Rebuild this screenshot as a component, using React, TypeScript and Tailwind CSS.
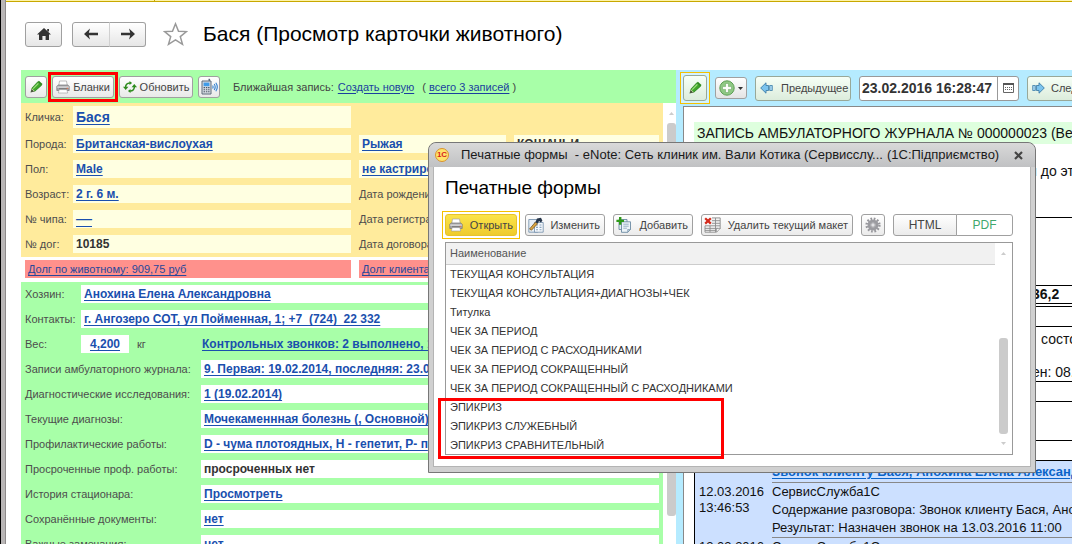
import type { ReactNode } from "react";
import clsx from "clsx";

type LinkRow = { label: string; value: string; plain?: boolean };

const HISTORY: LinkRow[] = [
  { label: "Записи амбулаторного журнала:", value: "9. Первая: 19.02.2014, последняя: 23.02.2016" },
  { label: "Диагностические исследования:", value: "1 (19.02.2014)" },
  { label: "Текущие диагнозы:", value: "Мочекаменнная болезнь (, Основной)" },
  { label: "Профилактические работы:", value: "D - чума плотоядных, H - гепетит, P- п" },
  { label: "Просроченные проф. работы:", value: "просроченных нет", plain: true },
  { label: "История стационара:", value: "Просмотреть" },
  { label: "Сохранённые документы:", value: "нет" },
  { label: "Важные замечания:", value: "нет" },
];

const FORMS = [
  "ТЕКУЩАЯ КОНСУЛЬТАЦИЯ",
  "ТЕКУЩАЯ КОНСУЛЬТАЦИЯ+ДИАГНОЗЫ+ЧЕК",
  "Титулка",
  "ЧЕК ЗА ПЕРИОД",
  "ЧЕК ЗА ПЕРИОД С РАСХОДНИКАМИ",
  "ЧЕК ЗА ПЕРИОД СОКРАЩЕННЫЙ",
  "ЧЕК ЗА ПЕРИОД СОКРАЩЕННЫЙ С РАСХОДНИКАМИ",
  "ЭПИКРИЗ",
  "ЭПИКРИЗ СЛУЖЕБНЫЙ",
  "ЭПИКРИЗ СРАВНИТЕЛЬНЫЙ",
];

function PencilIcon() {
  return (
    <svg viewBox="0 0 14 14" className="h-3.5 w-3.5">
      <path d="M1.5 12.5 2.6 8.4 5.6 11.4Z" fill="#4b5a3c" />
      <path d="M2.6 8.4 8.6 2 12.4 5.4 5.6 11.4Z" fill="#3fa52a" stroke="#1f7a14" strokeWidth=".7" />
      <path d="M4.2 8.6 9.4 3.4" stroke="#9be07c" strokeWidth="1.3" />
      <path d="m8.6 2 1.3-1.2 3.6 3.3-1.1 1.3Z" fill="#2c8a1c" />
      <path d="m2.6 8.4 3 3" stroke="#d8e8b0" strokeWidth=".9" />
    </svg>
  );
}

function PrinterIcon() {
  return (
    <svg viewBox="0 0 14 14" className="h-3.5 w-3.5 shrink-0">
      <path d="M3.5 1h7l.8 5H2.7Z" fill="#fff" stroke="#a3a3a3" strokeWidth=".7" />
      <path d="M.8 6.2 2.4 5h9.2l1.6 1.2v4.3H.8Z" fill="#a5a5a8" stroke="#77777a" strokeWidth=".7" />
      <path d="M1.2 6.5h11.6v1.2H1.2Z" fill="#e3e3e5" />
      <path d="M3 8.6h8v1H3Z" fill="#444" />
      <path d="M3.2 9.6h7.6l.9 3.4H2.3Z" fill="#fff" stroke="#999" strokeWidth=".6" />
      <path d="M10.7 7.8h1.4v1h-1.4Z" fill="#f06a3c" />
    </svg>
  );
}

function RefreshIcon() {
  return (
    <svg viewBox="0 0 14 12" className="h-3 w-3.5 shrink-0">
      <path d="M2.6 6.8C2.4 4 4 2 7 2" fill="none" stroke="#2e8b1e" strokeWidth="1.5" />
      <path d="M0 5.8h5.4L2.7 9Z" fill="#2e8b1e" />
      <path d="M11.4 5.2C11.6 8 10 10 7 10" fill="none" stroke="#2e8b1e" strokeWidth="1.5" />
      <path d="M8.6 6.2H14L11.3 3Z" fill="#2e8b1e" />
      <path d="m6.5 0 2.6 2-2.6 2ZM7.5 8 4.9 10l2.6 2Z" fill="#2e8b1e" />
    </svg>
  );
}

function PhoneIcon() {
  return (
    <svg viewBox="0 0 17 17" className="h-[17px] w-[17px] shrink-0">
      <path d="M1 3h9v13H1Z" fill="#d5dbe3" stroke="#5f6b7a" />
      <path d="M7.5.8h1.6V3H7.5Z" fill="#5f6b7a" />
      <path d="M2.6 4.6h5.8v3.6H2.6Z" fill="#3f9be8" />
      <path d="M2.6 9.6h1.4M4.9 9.6h1.4M7.1 9.6h1.4M2.6 11.7h1.4M4.9 11.7h1.4M7.1 11.7h1.4M2.6 13.8h1.4M4.9 13.8h1.4M7.1 13.8h1.4" stroke="#4d5866" strokeWidth="1.1" />
      <path d="M11.6 7.5q1 1.5 0 3M13.2 6q2 3 0 6M14.8 4.8q3 4.2 0 8.4" fill="none" stroke="#2f7fd0" strokeWidth="1.1" />
    </svg>
  );
}

function BigArrow({ right }: { right?: boolean }) {
  return (
    <svg viewBox="0 0 13 12" className={clsx("h-3 w-[13px] shrink-0", right && "-scale-x-100")}>
      <path d="M.7 6 6 .8v2.7h2.6v5H6v2.7Z" fill="#7cc4ee" stroke="#3e7ea8" strokeWidth=".9" />
      <path d="M9.7 3.5h2.6v5H9.7Z" fill="#a8d8f2" stroke="#3e7ea8" strokeWidth=".8" />
    </svg>
  );
}

function NavArrow({ right }: { right?: boolean }) {
  return (
    <svg viewBox="0 0 14 12" className={clsx("h-3 w-3.5", right && "-scale-x-100")}>
      <path d="M0 6 6 .4 4.8 4.7H14v2.6H4.8L6 11.6Z" fill="#333" />
    </svg>
  );
}

function EditFormIcon() {
  return (
    <svg viewBox="0 0 16 16" className="h-4 w-4 shrink-0">
      <path d="M.8 2.5h8l1 1v11.7h-9Z" fill="#e8eff6" stroke="#6f8ca8" strokeWidth=".8" />
      <path d="M6.5 5.5h8.7v9.7H6.5Z" fill="#f6f9fc" stroke="#6f8ca8" strokeWidth=".8" />
      <path d="M8 8h2M11.5 8h2M8 10.4h2M11.5 10.4h2M8 12.8h2M11.5 12.8h2" stroke="#8aa5bf" strokeWidth="1.1" />
      <path d="m1.5 12 6-7 2 1.8-6 6.4Z" fill="#d9a441" stroke="#6b4a18" strokeWidth=".7" />
      <path d="M7.5 5 9 1.6 13 .8l1.4 3-1.6 1.6L11 4 9.5 6.8Z" fill="#27364a" />
    </svg>
  );
}

function AddFormIcon() {
  return (
    <svg viewBox="0 0 16 16" className="h-4 w-4 shrink-0">
      <path d="M3 2.5h8v10H3Z" fill="#e6eef5" stroke="#6c8aa3" strokeWidth=".9" />
      <path d="M5.5 4.8h9v7.7l-2.8 2.8H5.5Z" fill="#edf4f9" stroke="#6c8aa3" strokeWidth=".9" />
      <path d="M7.3 7.2h5.4M7.3 9.2h5.4M7.3 11.2h3.6" stroke="#8fa9bd" strokeWidth=".9" />
      <path d="M14.5 12.5h-2.8v2.8Z" fill="#c3d3df" stroke="#6c8aa3" strokeWidth=".6" />
      <path d="M3 0h2.4v2.7H8v2.4H5.4v2.7H3V5.1H.4V2.7H3Z" fill="#2f9a1a" />
    </svg>
  );
}

function DeleteFormIcon() {
  return (
    <svg viewBox="0 0 17 16" className="h-4 w-[17px] shrink-0">
      <path d="M6.5.9h9.7v11l-3.4 3.4H1V8.5h5.5Z" fill="#f2f2f2" />
      <path d="M8 .9h8.2v10.8M8 3.7h8M8 6.3h8M1 8.8h15M1 11.4h13M1 15.2h11M1 13.4h11M11.5 1v14M6 8.8v6.4M1 8.8v6.4" stroke="#8b8b8b" strokeWidth=".9" fill="none" />
      <path d="M16.2 11.4h-3.6v3.9Z" fill="#fff" stroke="#8b8b8b" strokeWidth=".8" />
      <path d="m1.2 1.2 5.6 5.4M6.8 1.2 1.2 6.6" stroke="#d42a1c" strokeWidth="2.2" />
    </svg>
  );
}

function GearIcon() {
  return (
    <svg viewBox="0 0 16 16" className="h-4 w-4">
      <circle cx="8" cy="8" r="6.4" fill="none" stroke="#96969b" strokeWidth="2.4" strokeDasharray="1.7 1.65" />
      <circle cx="8" cy="8" r="4" fill="none" stroke="#9b9ba0" strokeWidth="3" />
      <circle cx="8" cy="8" r="2.2" fill="#e2e2e5" stroke="#7c7c82" strokeWidth=".6" />
    </svg>
  );
}

function Btn({ className, children, label }: { className?: string; children: ReactNode; label?: string }) {
  return (
    <button
      type="button"
      aria-label={label}
      className={clsx(
        "flex shrink-0 items-center rounded-[3px] border bg-linear-to-b whitespace-nowrap text-[#444]",
        className,
      )}
    >
      {children}
    </button>
  );
}

// yellow frame round the control that has the focus
function FocusFrame({ children }: { children: ReactNode }) {
  return <div className="-m-[3px] shrink-0 border border-[#f5c000] bg-white/40 p-[2px]">{children}</div>;
}

function Label({ children, className }: { children: ReactNode; className?: string }) {
  return <span className={clsx("shrink-0 whitespace-nowrap text-[#4d4d4d]", className)}>{children}</span>;
}

function Field({ className, plain, children }: { className?: string; plain?: boolean; children?: ReactNode }) {
  return (
    <div className={clsx("flex h-[18px] items-center overflow-hidden px-[3px] text-xs font-bold whitespace-nowrap", className)}>
      {plain ? (
        <span className="text-[#333]">{children}</span>
      ) : (
        <a href="#" className="text-[#1a4fae] underline underline-offset-2">
          {children}
        </a>
      )}
    </div>
  );
}

function PetCard() {
  const cream = "bg-[#ffffe1]";
  const cols = "grid grid-cols-[48px_278px_147px_1fr] items-center";
  return (
    <section className="flex flex-col gap-[7px] bg-[#ffeb9c] pt-[3px] pr-1 pb-1 pl-1">
      <div className={cols}>
        <Label>Кличка:</Label>
        <div className={clsx("flex h-[22px] items-center px-[3px]", cream)}>
          <a href="#" className="text-sm font-bold text-[#1a4fae] underline underline-offset-2">
            Бася
          </a>
        </div>
      </div>
      <div className={cols}>
        <Label>Порода:</Label>
        <Field className={cream}>Британская-вислоухая</Field>
        <Field className={clsx("ml-2 -mr-2", cream)}>Рыжая</Field>
        <Field className={clsx("ml-4", cream)} plain>
          КОШАЧЬИ
        </Field>
      </div>
      <div className={cols}>
        <Label>Пол:</Label>
        <Field className={cream}>Male</Field>
        <Field className={clsx("ml-2 -mr-2", cream)}>не кастрирован</Field>
      </div>
      <div className={cols}>
        <Label>Возраст:</Label>
        <Field className={cream}>2 г. 6 м.</Field>
        <Label className="ml-2">Дата рождения:</Label>
      </div>
      <div className={cols}>
        <Label>№ чипа:</Label>
        <Field className={cream}>
          <span className="text-base font-normal">—</span>
        </Field>
        <Label className="ml-2">Дата регистрации:</Label>
      </div>
      <div className={cols}>
        <Label>№ дог:</Label>
        <Field className={cream} plain>
          10185
        </Field>
        <Label className="ml-2">Дата договора:</Label>
      </div>
    </section>
  );
}

function OwnerCard() {
  return (
    <section className="flex flex-col gap-[7px] bg-[#a8ffa8] pt-[3px] pr-1 pb-1 pl-1">
      <div className="flex items-center">
        <Label className="w-14">Хозяин:</Label>
        <Field className="flex-1 bg-white">Анохина Елена Александровна</Field>
      </div>
      <div className="flex items-center">
        <Label className="w-14">Контакты:</Label>
        <Field className="flex-1 bg-white">
          <span className="whitespace-pre">г. Ангозеро СОТ, ул Пойменная, 1; +7  (724)  22 332</span>
        </Field>
      </div>
      <div className="flex items-center">
        <Label className="w-14">Вес:</Label>
        <Field className="w-12 justify-center bg-white">4,200</Field>
        <Label className="w-[70px] pl-2">кг</Label>
        <Field className="flex-1">Контрольных звонков: 2 выполнено, 1</Field>
      </div>
      {HISTORY.map((row) => (
        <div key={row.label} className="flex items-center">
          <Label className="w-44">{row.label}</Label>
          <Field className="flex-1 bg-white" plain={row.plain}>
            {row.value}
          </Field>
        </div>
      ))}
    </section>
  );
}

function LeftPanel() {
  const look = "h-[22px] justify-center border-[#a0a0a0] from-white to-[#e9e9e9]";
  return (
    <div className="flex w-[655px] shrink-0 flex-col">
      <div className="flex h-[33px] shrink-0 items-center gap-[5px] bg-[#a8ffa8] px-1">
        <Btn className={clsx(look, "w-[22px]")} label="Редактировать">
          <PencilIcon />
        </Btn>
        <div className="relative">
          <Btn className={clsx(look, "w-[62px] gap-[3px]")}>
            <PrinterIcon />
            Бланки
          </Btn>
          <div className="pointer-events-none absolute -inset-1 border-3 border-[#f00]" />
        </div>
        <Btn className={clsx(look, "w-[74px] gap-[3px]")}>
          <RefreshIcon />
          Обновить
        </Btn>
        <Btn className={clsx(look, "w-[22px]")} label="Позвонить">
          <PhoneIcon />
        </Btn>
        <div className="flex gap-1 pl-2 whitespace-nowrap text-[#444]">
          <span>Ближайшая запись:</span>
          <a href="#" className="text-[#1a3f9e] underline underline-offset-2">
            Создать новую
          </a>
          <span className="pl-1">
            ({" "}
            <a href="#" className="text-[#1a3f9e] underline underline-offset-2">
              всего 3 записей
            </a>{" "}
            )
          </span>
        </div>
      </div>
      <div className="flex min-h-0 flex-1">
        <div className="min-w-0 flex-1">
          <PetCard />
          <div className="flex gap-2 bg-white px-1 pt-[3px] pb-1">
            <div className="flex h-[18px] w-[326px] items-center bg-[#ff918c] px-[3px]">
              <a href="#" className="text-[#27479b] underline underline-offset-2">
                Долг по животному: 909,75 руб
              </a>
            </div>
            <div className="flex h-[18px] flex-1 items-center bg-[#ff918c] px-[3px]">
              <a href="#" className="text-[#27479b] underline underline-offset-2">
                Долг клиента:
              </a>
            </div>
          </div>
          <OwnerCard />
        </div>
        <div className="flex w-[13px] flex-col items-end bg-white">
          <div className="flex h-5 w-[9px] items-center justify-center">
            <svg viewBox="0 0 5 3" className="h-[3px] w-[5px]">
              <path d="M0 3 2.5 0 5 3Z" fill="#ccc" />
            </svg>
          </div>
          <div className="h-[393px] w-[9px] rounded-[3px] bg-[#cbcbcb]" />
        </div>
      </div>
    </div>
  );
}

function JournalToolbar() {
  const look = "border-[#98a898] from-[#f6fff6] to-[#dcecdc]";
  return (
    <div className="flex h-9 shrink-0 items-center gap-2 pl-[7px] text-[#444]">
      <FocusFrame>
        <Btn className={clsx(look, "h-[26px] w-6 justify-center")} label="Изменить запись">
          <PencilIcon />
        </Btn>
      </FocusFrame>
      <Btn className="h-[22px] w-8 justify-center gap-[3px] border-[#a0a0a0] from-white to-[#e4e4e4]" label="Добавить запись">
        <svg viewBox="0 0 16 16" className="h-4 w-4">
          <circle cx="8" cy="8" r="7.2" fill="#8fc884" stroke="#5d9e55" />
          <path d="M6.6 3.5h2.8v3.1h3.1v2.8H9.4v3.1H6.6V9.4H3.5V6.6h3.1Z" fill="#fff" stroke="#5d9e55" strokeWidth=".5" />
        </svg>
        <svg viewBox="0 0 5 3" className="h-[3px] w-[5px]">
          <path d="M0 0h5L2.5 3Z" fill="#333" />
        </svg>
      </Btn>
      <Btn className={clsx(look, "h-[25px] w-24 gap-2 pl-1")}>
        <BigArrow />
        Предыдущее
      </Btn>
      <div className="flex h-[25px] w-40 shrink-0 overflow-hidden rounded-[3px] border border-[#999] bg-white">
        <input
          aria-label="Дата записи"
          defaultValue="23.02.2016 16:28:47"
          className="w-[138px] border-r border-[#999] px-[2px] text-sm font-bold text-[#333] outline-none"
        />
        <button type="button" aria-label="Выбрать дату" className="flex flex-1 items-center justify-center">
          <svg viewBox="0 0 11 10" className="h-2.5 w-[11px]">
            <path d="M.5.5h10v9H.5Z" fill="#fff" stroke="#666" />
            <path d="M0 1h11" stroke="#555" strokeWidth="2" />
            <path d="M2 4.5h7M2 6.5h7" stroke="#666" strokeDasharray="1 1" />
          </svg>
        </button>
      </div>
      <Btn className={clsx(look, "h-[25px] w-24 gap-1.5 pl-1")}>
        <BigArrow right />
        Следующее
      </Btn>
    </div>
  );
}

function Journal() {
  return (
    <div className="flex min-w-0 flex-1 flex-col overflow-hidden bg-[#b5ebff]">
      <JournalToolbar />
      <div className="ml-[7px] flex-1 overflow-hidden border-t border-l border-[#888] bg-white pl-2.5 text-sm whitespace-nowrap text-[#111]">
        <h2 className="mt-[15px] flex h-[22px] items-center bg-[#deffde] pl-[3px]">
          ЗАПИСЬ АМБУЛАТОРНОГО ЖУРНАЛА № 000000023 (Ветеринар)
        </h2>
        <div className="h-[74px] border-b border-black pt-[18px] pl-[335px] leading-[18px]">й до этого</div>
        <div className="border-l border-black">
          <div className="h-[68px] border-b border-black" />
          <div className="h-[18px] border-b border-black pl-[337px] leading-[17px] font-bold">36,2</div>
          <div className="mt-[2px] h-[21px] border-y border-black" />
          <div className="h-[55px] border-b border-black pl-[337px]">
            <p className="pt-[2px] pl-[9px] leading-5">состояние</p>
            <p className="pt-[13px] leading-5">ен: 08.03</p>
          </div>
          <div className="h-5 border-b border-black" />
          <div className="h-[39px] border-b border-black" />
          <div className="h-5 border-b border-black" />
          <div className="bg-[#cce0ff] pl-1 text-[13px]">
            <div className="ml-[73px] h-[22px] border-b border-[#888] pt-[2px] leading-[18px]">
              <a href="#" className="font-bold text-[#0a64c8] underline underline-offset-2">
                Звонок клиенту Бася, Анохина Елена Александровна
              </a>
            </div>
            <div className="flex">
              <div className="w-[73px] shrink-0 pt-px leading-4">
                12.03.2016
                <br />
                13:46:53
              </div>
              <div className="flex-1 border-b border-[#888] leading-[18px]">
                <p>СервисСлужба1С</p>
                <p>Содержание разговора: Звонок клиенту Бася, Анохина</p>
                <p>Результат: Назначен звонок на 13.03.2016 11:00</p>
              </div>
            </div>
            <div className="flex">
              <div className="w-[73px] shrink-0 leading-[18px]">12.03.2016</div>
              <div className="flex-1 leading-[18px]">СервисСлужба1С</div>
            </div>
          </div>
        </div>
      </div>
    </div>
  );
}

function PrintFormsDialog() {
  const look = "h-[22px] border-[#a0a0a0] from-white to-[#ebebeb]";
  return (
    <div
      role="dialog"
      aria-labelledby="dlg-heading"
      className="absolute top-[142px] left-[428px] w-[608px] rounded-t-lg border border-[#777] bg-[#d0d0d0] px-1 pb-[5px]"
    >
      <div className="-mx-1 flex h-6 items-center rounded-t-lg bg-linear-to-b from-[#d9d9d9] to-[#c0c1c3] px-1.5 text-[13px] whitespace-pre text-[#1a1a1a]">
        <span className="mr-3 flex h-3.5 w-3.5 shrink-0 items-center justify-center rounded-full border border-[#d9932e] bg-[#ffe36b] text-[8px] font-bold text-[#d6221c]">
          1С
        </span>
        <span>Печатные формы  - eNote: Сеть клиник им. Вали Котика (Сервисслу...</span>
        <span className="pl-1">(1С:Підприємство)</span>
        <button type="button" aria-label="Закрыть" className="mr-1.5 ml-auto">
          <svg viewBox="0 0 9 9" className="h-[9px] w-[9px]">
            <path d="m1 1 7 7M8 1 1 8" stroke="#444" strokeWidth="2.2" />
          </svg>
        </button>
      </div>
      <div className="border border-t-0 border-[#b4b4b4] bg-white pt-2.5 pr-[17px] pb-[11px] pl-[11px]">
        <h1 id="dlg-heading" className="text-[19px] leading-[22px] text-black">
          Печатные формы
        </h1>
        <div className="mt-[15px] flex items-center gap-2">
          <FocusFrame>
            <Btn className="h-[22px] w-[72px] justify-between border-[#e6c32e] from-[#fbe44a] to-[#efcb2c] px-[3px]">
              <PrinterIcon />
              Открыть
            </Btn>
          </FocusFrame>
          <Btn className={clsx(look, "w-20 justify-between pr-1 pl-[2px]")}>
            <EditFormIcon />
            Изменить
          </Btn>
          <Btn className={clsx(look, "w-20 justify-between pr-1 pl-[2px]")}>
            <AddFormIcon />
            Добавить
          </Btn>
          <Btn className={clsx(look, "w-[152px] justify-between pr-1 pl-[2px]")}>
            <DeleteFormIcon />
            Удалить текущий макет
          </Btn>
          <Btn className={clsx(look, "w-6 justify-center")} label="Настройки">
            <GearIcon />
          </Btn>
          <div className="flex flex-1 text-xs">
            <Btn className={clsx(look, "flex-1 justify-center rounded-r-none")}>HTML</Btn>
            <button type="button" className="-ml-px w-[57px] rounded-r-[3px] border border-[#a0a0a0] bg-white text-[#3fa86c]">
              PDF
            </button>
          </div>
        </div>
        <div className="mt-1.5 flex border border-[#999]">
          <table className="flex-1 border-collapse text-left text-[#333]">
            <thead>
              <tr className="h-[21px] border-b border-[#ccc] bg-[#f1f1f1]">
                <th className="p-0 pl-1 font-normal text-[#555]">Наименование</th>
              </tr>
            </thead>
            <tbody>
              {FORMS.map((name) => (
                <tr key={name} className="h-[19px]">
                  <td className="p-0 pl-1">{name}</td>
                </tr>
              ))}
            </tbody>
          </table>
          <div className="flex w-[17px] flex-col items-center py-[9px]">
            <svg viewBox="0 0 5 3" className="h-[3px] w-[5px]">
              <path d="M0 3 2.5 0 5 3Z" fill="#ccc" />
            </svg>
            <div className="mt-auto mb-2 h-24 w-[9px] rounded-[3px] bg-[#cbcbcb]" />
            <svg viewBox="0 0 5 3" className="h-[3px] w-[5px]">
              <path d="M0 0h5L2.5 3Z" fill="#ccc" />
            </svg>
          </div>
        </div>
      </div>
      <div className="pointer-events-none absolute top-[255px] left-[9px] h-[61px] w-[286px] border-3 border-[#f00]" />
    </div>
  );
}

export default function App() {
  const navLook = "h-[25px] justify-center border-[#a0a0a0] from-white to-[#e6e6e6]";
  return (
    <div className="relative flex h-screen overflow-hidden bg-white font-['Liberation_Sans',sans-serif] text-[11px] leading-4">
      <div className="w-1.5 shrink-0 border-r border-l border-r-[#8d8a8a] border-l-black bg-[#b9b6b6]" />
      <div className="flex min-w-0 flex-1 flex-col">
        <div className="flex h-[2px] shrink-0 border-b border-[#c8a800] bg-[#fdf3a8]">
          <div className="w-[149px] border-r border-[#c8a800]" />
        </div>
        <header className="flex h-[68px] shrink-0 items-center pb-1 pl-[19px]">
          <Btn className={clsx(navLook, "w-[37px]")} label="Домой">
            <svg viewBox="0 0 14 12" className="h-3 w-3.5">
              <path d="M7 0 14 6.4H12V12H8.6V8H5.4v4H2V6.4H0Z" fill="#333" />
              <path d="M10.2 1h1.8v2.6h-1.8Z" fill="#333" />
            </svg>
          </Btn>
          <div className="ml-2.5 flex">
            <Btn className={clsx(navLook, "w-[38px] rounded-r-none")} label="Назад">
              <NavArrow />
            </Btn>
            <Btn className={clsx(navLook, "-ml-px w-[37px] rounded-l-none border-l-[#d0d0d0]")} label="Вперёд">
              <NavArrow right />
            </Btn>
          </div>
          <button type="button" aria-label="В избранное" className="ml-[17px]">
            <svg viewBox="0 0 25 24" className="h-6 w-[25px]">
              <path d="m12.5 1.8 3 7.4 8 .4-6.2 5 2.2 7.7-7-4.4-7 4.4 2.2-7.7-6.2-5 8-.4Z" fill="#fff" stroke="#999" strokeWidth="1.5" />
            </svg>
          </button>
          <h1 className="ml-[15px] text-[21px] leading-6 whitespace-nowrap text-black">Бася (Просмотр карточки животного)</h1>
        </header>
        <main className="flex min-h-0 flex-1 pl-[15px]">
          <LeftPanel />
          <Journal />
        </main>
      </div>
      <PrintFormsDialog />
    </div>
  );
}
